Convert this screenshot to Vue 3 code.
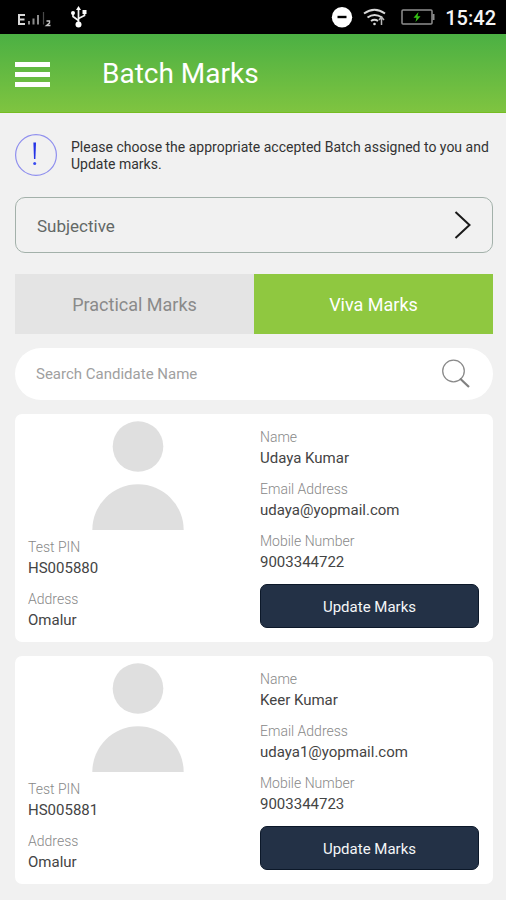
<script setup>
import { ref } from 'vue'

const marksType = ref('Subjective')
const activeTab = ref('Viva Marks')
const tabs = ['Practical Marks', 'Viva Marks']
const query = ref('')

const candidates = [
  { pin: 'HS005880', address: 'Omalur', name: 'Udaya Kumar', email: 'udaya@yopmail.com', mobile: '9003344722' },
  { pin: 'HS005881', address: 'Omalur', name: 'Keer Kumar', email: 'udaya1@yopmail.com', mobile: '9003344723' },
]
</script>

<template>
  <div class="screen">
    <div class="status">
      <div class="status-group">
        <svg class="signal" width="34" height="18" viewBox="0 0 34 18" aria-hidden="true">
          <path d="M8 4H2V13H8M2 8.500H7.500" fill="none" stroke="#d8d8d8" stroke-width="2" />
          <path d="M12 10V13.500M16.500 7.500V13.500M21 4V13.500" stroke="#8c8c8c" stroke-width="2" />
          <path d="M26.500 1V13.500" stroke="#4a4a4a" stroke-width="1.200" />
          <path d="M29.500 10H32.500V12L29.500 14.500H33.500" fill="none" stroke="#c4c4c4" stroke-width="1.400" />
        </svg>
        <svg width="18" height="22" viewBox="0 0 18 22" aria-hidden="true">
          <g fill="none" stroke="#f2f2f2" stroke-width="1.700">
            <path d="M8.500 3V18" />
            <path d="M3 7V10.500L8.500 14.500" />
            <path d="M14.500 6V9.500L8.500 12.500" />
          </g>
          <g fill="#fff">
            <path d="M8.500 0L11 4H6Z" />
            <circle cx="8.500" cy="18.500" r="3" />
            <circle cx="3" cy="7" r="2" />
            <path d="M12.500 4H16.500V8H12.500Z" />
          </g>
        </svg>
      </div>
      <div class="status-group right">
        <svg width="22" height="22" viewBox="0 0 22 22" aria-hidden="true">
          <circle cx="11" cy="11.300" r="10.200" fill="#fff" />
          <path d="M6.500 11H15.500" stroke="#000" stroke-width="2.400" />
        </svg>
        <svg width="24" height="18" viewBox="0 0 24 18" aria-hidden="true">
          <g fill="none" stroke="#d8d8d8" stroke-width="2">
            <path d="M1 5.500Q11.500-2 22 5.500" />
            <path d="M4.500 9.500Q11.500 4.500 19 9.500" />
            <path d="M8 13Q11.500 10.500 15 13" />
          </g>
          <circle cx="11.500" cy="16" r="1.300" fill="#d8d8d8" />
          <path d="M16 12L18.500 9L21 12M18.500 9.500V17" fill="none" stroke="#b8b8b8" stroke-width="1.500" />
        </svg>
        <svg class="battery" width="34" height="16" viewBox="0 0 34 16" aria-hidden="true">
          <rect x="1" y="1" width="30" height="14" rx="1" fill="none" stroke="#8e8e8e" stroke-width="1.500" />
          <path d="M32.500 5V11" stroke="#8e8e8e" stroke-width="2" />
          <path d="M17.500 3L12.500 8.800H15.500L14.500 13L19.500 7.200H16.500Z" fill="#35c414" />
        </svg>
        <time class="clock">15:42</time>
      </div>
    </div>

    <header class="appbar">
      <button class="menu" type="button" aria-label="Menu">
        <span></span><span></span><span></span>
      </button>
      <h1>Batch Marks</h1>
    </header>

    <main class="content">
      <div class="notice">
        <svg width="44" height="44" viewBox="0 0 44 44" aria-hidden="true">
          <circle cx="21" cy="21" r="20.400" fill="none" stroke="#8f8fee" stroke-width="1.200" />
          <path d="M18.400 8.500H21L20.400 25H19Z" fill="#2433e6" />
          <circle cx="19.700" cy="29.500" r="1.500" fill="#3a4cf0" />
        </svg>
        <p>Please choose the appropriate accepted Batch assigned to you and Update marks.</p>
      </div>

      <div class="picker">
        <select v-model="marksType" aria-label="Marks type">
          <option>Subjective</option>
        </select>
        <svg width="18" height="30" viewBox="0 0 18 30" aria-hidden="true">
          <path d="M1.500 2L15.500 15L1.500 28" fill="none" stroke="#1a1a1a" stroke-width="2" />
        </svg>
      </div>

      <div class="tabs" role="tablist">
        <button
          v-for="tab in tabs"
          :key="tab"
          type="button"
          role="tab"
          class="tab"
          :class="{ active: tab === activeTab }"
          :aria-selected="tab === activeTab"
          @click="activeTab = tab"
        >{{ tab }}</button>
      </div>

      <div class="search">
        <input v-model="query" type="search" placeholder="Search Candidate Name" aria-label="Search Candidate Name" />
        <button type="button" aria-label="Search">
          <svg width="30" height="30" viewBox="0 0 30 30" aria-hidden="true">
            <circle cx="12.500" cy="12" r="10.800" fill="none" stroke="#8a8a8a" stroke-width="1.300" />
            <path d="M19 19.500L28 28" stroke="#808080" stroke-width="2.200" />
          </svg>
        </button>
      </div>

      <article v-for="person in candidates" :key="person.pin" class="card">
        <div class="column">
          <svg class="avatar" width="92" height="109" viewBox="0 0 92 109" aria-hidden="true">
            <circle cx="46" cy="25.500" r="25.300" fill="#dfdfdf" />
            <path d="M0.300 109A45.700 45.700 0 0 1 91.700 109Z" fill="#dfdfdf" />
          </svg>
          <dl>
            <div><dt>Test PIN</dt><dd>{{ person.pin }}</dd></div>
            <div><dt>Address</dt><dd>{{ person.address }}</dd></div>
          </dl>
        </div>
        <div class="column details">
          <dl>
            <div><dt>Name</dt><dd>{{ person.name }}</dd></div>
            <div><dt>Email Address</dt><dd>{{ person.email }}</dd></div>
            <div><dt>Mobile Number</dt><dd>{{ person.mobile }}</dd></div>
          </dl>
          <button type="button" class="update">Update Marks</button>
        </div>
      </article>
    </main>
  </div>
</template>

<style>
body {
  background: #f1f1f1;
}
</style>

<style scoped>
.screen {
  min-height: 100vh;
  box-sizing: border-box;
  background: #f1f1f1;
  font-family: Roboto, "Liberation Sans", sans-serif;
  color: #333;
}
button,
input,
select {
  font-family: inherit;
  margin: 0;
  border: 0;
  background: none;
  cursor: pointer;
}
svg {
  display: block;
  flex: none;
}
.status {
  display: flex;
  align-items: center;
  justify-content: space-between;
  height: 34px;
  padding: 0 10px 0 17px;
  background: #000;
}
.status-group {
  display: flex;
  align-items: center;
  gap: 19px;
}
.signal {
  margin-top: 6px;
}
.status-group.right {
  gap: 10px;
}
.battery {
  margin-left: 4px;
}
.clock {
  padding-top: 2px;
  color: #f4f4f4;
  font-size: 20px;
  line-height: 24px;
  font-weight: 500;
}
.appbar {
  display: flex;
  align-items: center;
  gap: 52px;
  height: 79px;
  box-sizing: border-box;
  padding: 2px 15px 0;
  background: linear-gradient(#4bb043, #7fc440);
  border-bottom: 1px solid #76bd22;
}
.menu {
  display: flex;
  flex-direction: column;
  gap: 5px;
  width: 35px;
  padding: 0;
}
.menu span {
  height: 5px;
  background: #fff;
}
h1 {
  margin: 0;
  color: #fff;
  font-size: 28px;
  line-height: 36px;
  font-weight: 400;
}
.content {
  display: flex;
  flex-direction: column;
  gap: 14px;
  padding: 21px 13px 16px 15px;
}
.notice {
  display: flex;
  align-items: center;
  gap: 12px;
  margin-bottom: 5px;
}
.notice p {
  margin: 0;
  font-size: 14px;
  line-height: 17px;
}
.picker {
  display: grid;
  align-items: center;
  height: 56px;
  margin-bottom: 7px;
}
.picker > * {
  grid-area: 1 / 1;
}
.picker select {
  appearance: none;
  width: 100%;
  height: 100%;
  padding: 2px 48px 0 21px;
  border: 1px solid #a3b1aa;
  border-radius: 10px;
  color: #636866;
  font-size: 17px;
}
.picker svg {
  justify-self: end;
  margin-right: 21px;
  pointer-events: none;
}
.tabs {
  display: grid;
  grid-template-columns: 1fr 1fr;
}
.tab {
  height: 60px;
  padding: 0;
  background: #e4e4e4;
  color: #8a8a8a;
  font-size: 18px;
}
.tab.active {
  background: #8fc840;
  color: #fff;
}
.search {
  display: flex;
  align-items: center;
  height: 52px;
  padding: 0 22px 0 21px;
  border-radius: 26px;
  background: #fff;
}
.search input {
  flex: 1;
  min-width: 0;
  padding: 0;
  outline: none;
  color: #555;
  font-size: 15px;
}
.search input::placeholder {
  color: #a0a0a0;
}
.search button {
  padding: 0;
}
.card {
  display: grid;
  grid-template-columns: 1fr 1fr;
  border-radius: 7px;
  background: #fff;
}
.column {
  display: flex;
  flex-direction: column;
  gap: 7px;
  padding: 7px 7px 11px 13px;
}
.column.details {
  gap: 11px;
  padding: 13px 14px 14px 6px;
}
.avatar {
  align-self: center;
}
dl {
  display: flex;
  flex-direction: column;
  gap: 10px;
  margin: 0;
}
dt {
  color: #888;
  font-size: 14px;
  line-height: 20px;
  font-weight: 300;
}
dd {
  margin: 0;
  color: #444;
  font-size: 15px;
  line-height: 22px;
}
.update {
  height: 44px;
  padding: 2px 0 0;
  border: 1px solid #0c1829;
  border-radius: 7px;
  background: #233146;
  color: #f4f6f8;
  font-size: 15px;
}
</style>
